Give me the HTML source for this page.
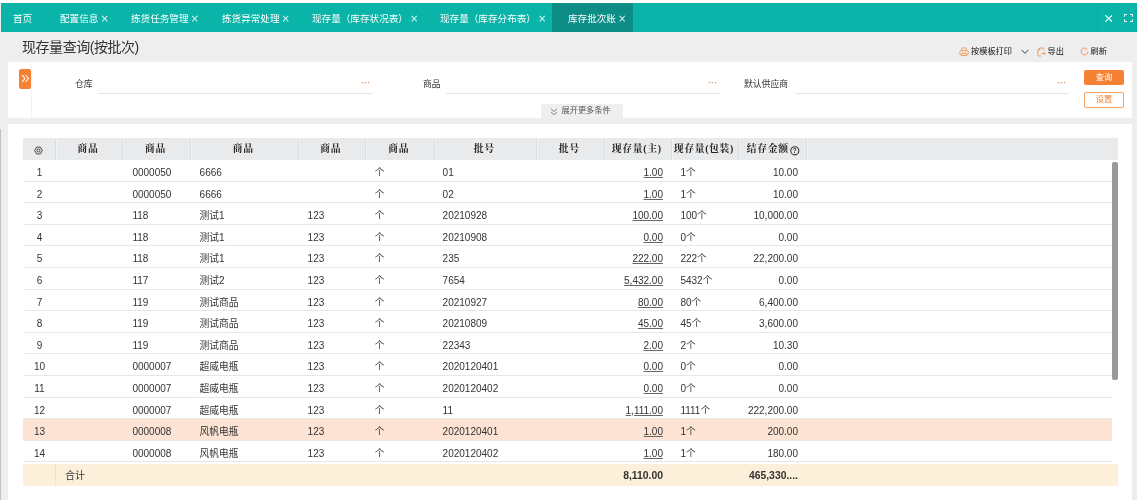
<!DOCTYPE html><html lang="zh-CN"><head><meta charset="utf-8"><title>现存量查询(按批次)</title><style>
*{box-sizing:border-box;margin:0;padding:0}
html,body{width:1137px;height:500px;overflow:hidden;background:#eeeeee;font-family:"Liberation Sans","Noto Sans CJK SC",sans-serif;color:#333}
.abs{position:absolute}
#root{position:absolute;left:0;top:0;width:1137px;height:500px;will-change:transform}
#top{left:0;top:0;width:1137px;height:3px;background:#fff}
#bar{left:1px;top:3.2px;width:1136px;height:29px;background:#0ab4a8}
#bar .t{position:absolute;top:0.8px;height:29.5px;line-height:30px;color:#fff;font-size:9.6px;white-space:nowrap}
#bar .x{font-size:10px;margin-left:2px;opacity:.88;font-weight:400;font-family:'DejaVu Sans',sans-serif;vertical-align:-0.5px}
#act{left:551px;top:0;width:80.8px;height:29px;background:#0d8d85}
#title{left:22px;top:37px;font-size:14px;color:#333;line-height:20px;white-space:nowrap;letter-spacing:-0.45px}
.tb{top:45.5px;font-size:8.2px;color:#111;line-height:12px;white-space:nowrap}
#f{left:8px;top:61.5px;width:1123.5px;height:56.7px;background:#fff}
#fb{left:18.5px;top:69px;width:12.5px;height:20px;background:#f58233;border-radius:2px;color:#fff}
#fl{left:31px;top:61.5px;width:1px;height:56.7px;background:#f3f3f3}
.lb{font-size:8.8px;color:#333;line-height:12px;white-space:nowrap;top:77.6px}
.ul{height:1px;background:#e6e6e6;top:92.5px}
.dots{color:#e8935a;font-size:9px;font-weight:700;top:77.3px;line-height:12px;letter-spacing:0.1px}
#q{left:1084px;top:69.7px;width:40px;height:15.5px;background:#f58233;border-radius:2px;color:#fff;font-size:8.2px;line-height:16.5px;text-align:center}
#s{left:1084px;top:92px;width:40px;height:15.5px;background:#fff;border:1px solid #f5a26a;border-radius:2px;color:#f58233;font-size:8.2px;line-height:14.5px;text-align:center}
#more{left:541px;top:104.3px;width:81.5px;height:14px;background:#efefef;border-radius:2px 2px 0 0;font-size:8.2px;color:#555;line-height:14px;white-space:nowrap}
#p{left:8px;top:124.4px;width:1123.5px;height:376px;background:#fff}
#dl{left:0;top:129px;width:1px;height:371px;background:#c2c2c2}
#th{left:22.5px;top:138.4px;width:1095px;height:21.6px;background:#e9eaec}
.h{top:138px;height:21.7px;line-height:21.7px;text-align:center;font-family:"Liberation Serif","Noto Serif CJK SC",serif;font-weight:700;font-size:9.8px;color:#222;white-space:nowrap;letter-spacing:0.7px;padding-right:2.2px}
.hs{top:138.6px;width:1px;height:21.7px;background:#dcdddf;box-shadow:1px 0 0 #f2f3f4}
.r{left:22.5px;width:1089.5px;border-bottom:1px solid #e7e7e7}
.c{font-size:10px;line-height:14px;color:#333;white-space:nowrap}
.z{font-size:9.75px}
.u{text-decoration:underline;text-decoration-color:#666;text-underline-offset:1px}
#tot{left:22.5px;top:463.8px;width:1095px;height:21.8px;background:#fdf0db}
#sb{left:1112px;top:161.5px;width:5.5px;height:218.5px;background:#9a9a9a;border-radius:2px}
</style></head><body><div id="root">
<div id="top" class="abs"></div>
<div id="bar" class="abs"><div id="act" class="abs"></div>
<div class="t" style="left:12px">首页</div>
<div class="t" style="left:59px">配置信息<span class="x">×</span></div>
<div class="t" style="left:130px">拣货任务管理<span class="x">×</span></div>
<div class="t" style="left:221px">拣货异常处理<span class="x">×</span></div>
<div class="t" style="left:311px">现存量（库存状况表）<span class="x">×</span></div>
<div class="t" style="left:439px">现存量（库存分布表）<span class="x">×</span></div>
<div class="t" style="left:567px">库存批次账<span class="x">×</span></div>
<svg class="abs" style="left:1103.8px;top:11.6px" width="7.4" height="7" viewBox="0 0 7.4 7" fill="none" stroke="#e8fbf9" stroke-width="1.2"><path d="M0.3 0.2L7.1 6.8M7.1 0.2L0.3 6.8"/></svg>
<div class="abs" style="left:1095.7px;top:0;width:1px;height:29px;background:rgba(0,0,0,.035)"></div><div class="abs" style="left:1115.8px;top:0;width:1px;height:29px;background:rgba(0,0,0,.035)"></div>
<svg class="abs" style="left:1123px;top:10.8px" width="9" height="8" viewBox="0 0 9 9" preserveAspectRatio="none" fill="none" stroke="#e8fbf9" stroke-width="1.1"><path d="M0.5 3V0.5H3M6 0.5H8.5V3M8.5 6V8.5H6M3 8.5H0.5V6"/></svg>
</div>
<div id="title" class="abs">现存量查询(按批次)</div>
<div class="abs tb" style="left:971px">按模板打印</div>
<div class="abs tb" style="left:1047.5px">导出</div>
<div class="abs tb" style="left:1090.5px">刷新</div>
<svg class="abs" style="left:958.5px;top:46.5px" width="10" height="10" viewBox="0 0 10 10" fill="none" stroke="#f39a5e" stroke-width="1"><path d="M2.6 3.6V1.6Q2.6 1 3.2 1H6.8Q7.4 1 7.4 1.6V3.6"/><rect x="0.8" y="3.6" width="8.4" height="4.6" rx="1.8"/><path d="M2.8 6.2H7.2V8.6H2.8Z" fill="#eee"/></svg>
<svg class="abs" style="left:1020.5px;top:48.7px" width="8" height="6" viewBox="0 0 8 6" fill="none" stroke="#444" stroke-width="1"><path d="M0.6 0.8L4 4.4L7.4 0.8"/></svg>
<svg class="abs" style="left:1037px;top:46.5px" width="9" height="10" viewBox="0 0 9 10" fill="none" stroke="#f39a5e" stroke-width="1"><path d="M6.8 3V1.8Q6.8 1 6 1H2.6L0.8 3V8Q0.8 9 1.8 9H4"/><path d="M2.8 1V3H0.8"/><path d="M4.2 6.4H8M6.6 4.8L8.2 6.4L6.6 8"/></svg>
<svg class="abs" style="left:1079.8px;top:46.8px" width="9" height="9" viewBox="0 0 9 9" fill="none" stroke="#f39a5e" stroke-width="1"><path d="M7.9 4.5A3.4 3.4 0 1 1 6.6 1.8"/><path d="M5.2 0.8L6.9 1.9L5.6 3.3" stroke-width="0.8"/></svg>
<div id="f" class="abs"></div><div id="fl" class="abs"></div>
<div id="fb" class="abs"><svg style="position:absolute;left:2px;top:5px" width="9" height="9" viewBox="0 0 9 9" fill="none" stroke="#fff" stroke-width="1.1"><path d="M1 1L4 4.5L1 8M4.5 1L7.5 4.5L4.5 8"/></svg></div>
<div class="abs lb" style="left:75px">仓库</div><div class="abs ul" style="left:98px;width:275px"></div><div class="abs dots" style="left:361px">···</div>
<div class="abs lb" style="left:423px">商品</div><div class="abs ul" style="left:446px;width:275px"></div><div class="abs dots" style="left:708px">···</div>
<div class="abs lb" style="left:744px">默认供应商</div><div class="abs ul" style="left:795px;width:274px"></div><div class="abs dots" style="left:1057px">···</div>
<div id="q" class="abs">查询</div><div id="s" class="abs">设置</div>
<div id="more" class="abs"><svg style="position:absolute;left:8.5px;top:3.5px" width="8" height="8" viewBox="0 0 8 8" fill="none" stroke="#777" stroke-width="0.9"><path d="M1 0.8L4 3.6L7 0.8M1 4L4 6.8L7 4"/></svg><span style="position:absolute;left:20.5px">展开更多条件</span></div>
<div id="p" class="abs"></div><div id="dl" class="abs"></div>
<div id="th" class="abs"></div>
<svg class="abs" style="left:34.3px;top:145.5px" width="9" height="9" viewBox="0 0 9 9" fill="none" stroke="#444" stroke-width="1"><path d="M0.7 4.5L2.6 1.1H6.4L8.3 4.5L6.4 7.9H2.6Z" stroke-linejoin="round"/><circle cx="4.5" cy="4.5" r="1.5"/></svg>
<div class="abs hs" style="left:54.7px"></div>
<div class="abs h" style="left:55.2px;width:67.7px">商品</div>
<div class="abs hs" style="left:122.4px"></div>
<div class="abs h" style="left:122.9px;width:67.4px">商品</div>
<div class="abs hs" style="left:189.8px"></div>
<div class="abs h" style="left:190.3px;width:108px">商品</div>
<div class="abs hs" style="left:297.8px"></div>
<div class="abs h" style="left:298.3px;width:67.3px">商品</div>
<div class="abs hs" style="left:365.1px"></div>
<div class="abs h" style="left:365.6px;width:68.4px">商品</div>
<div class="abs hs" style="left:433.5px"></div>
<div class="abs h" style="left:434px;width:102.6px">批号</div>
<div class="abs hs" style="left:536.1px"></div>
<div class="abs h" style="left:536.6px;width:67.5px">批号</div>
<div class="abs hs" style="left:603.6px"></div>
<div class="abs h" style="left:604.1px;width:67.3px">现存量(主)</div>
<div class="abs hs" style="left:670.9px"></div>
<div class="abs h" style="left:671.4px;width:67.2px">现存量(包装)</div>
<div class="abs hs" style="left:738.1px"></div>
<div class="abs h" style="left:738.6px;width:67.7px;text-align:left;padding-left:8.2px">结存金额</div>
<svg class="abs" style="left:790.2px;top:146.4px" width="9.6" height="9.6" viewBox="0 0 9 9" fill="none" stroke="#333" stroke-width="1"><circle cx="4.5" cy="4.5" r="3.8"/><text x="4.5" y="6.6" font-size="6" font-family="Liberation Sans" font-weight="700" text-anchor="middle" fill="#333" stroke="none">?</text></svg>
<div class="abs hs" style="left:805.8px"></div>
<div class="abs r" style="top:160.00px;height:21.60px;background:#fff"></div>
<div class="c abs" style="left:22px;width:35px;text-align:center;top:166.00px">1</div>
<div class="c abs" style="left:132.4px;top:166.00px">0000050</div>
<div class="c abs" style="left:199.6px;top:166.00px">6666</div>
<div class="c abs" style="left:374.8px;top:166.00px"><span class="z">个</span></div>
<div class="c abs" style="left:442.6px;top:166.00px">01</div>
<div class="c abs u" style="right:474px;top:166.00px">1.00</div>
<div class="c abs" style="left:680.4px;top:166.00px">1<span class="z">个</span></div>
<div class="c abs" style="right:339px;top:166.00px">10.00</div>
<div class="abs r" style="top:181.60px;height:21.60px;background:#fff"></div>
<div class="c abs" style="left:22px;width:35px;text-align:center;top:187.60px">2</div>
<div class="c abs" style="left:132.4px;top:187.60px">0000050</div>
<div class="c abs" style="left:199.6px;top:187.60px">6666</div>
<div class="c abs" style="left:374.8px;top:187.60px"><span class="z">个</span></div>
<div class="c abs" style="left:442.6px;top:187.60px">02</div>
<div class="c abs u" style="right:474px;top:187.60px">1.00</div>
<div class="c abs" style="left:680.4px;top:187.60px">1<span class="z">个</span></div>
<div class="c abs" style="right:339px;top:187.60px">10.00</div>
<div class="abs r" style="top:203.20px;height:21.60px;background:#fff"></div>
<div class="c abs" style="left:22px;width:35px;text-align:center;top:209.20px">3</div>
<div class="c abs" style="left:132.4px;top:209.20px">118</div>
<div class="c abs" style="left:199.6px;top:209.20px"><span class="z">测试</span>1</div>
<div class="c abs" style="left:307.6px;top:209.20px">123</div>
<div class="c abs" style="left:374.8px;top:209.20px"><span class="z">个</span></div>
<div class="c abs" style="left:442.6px;top:209.20px">20210928</div>
<div class="c abs u" style="right:474px;top:209.20px">100.00</div>
<div class="c abs" style="left:680.4px;top:209.20px">100<span class="z">个</span></div>
<div class="c abs" style="right:339px;top:209.20px">10,000.00</div>
<div class="abs r" style="top:224.80px;height:21.60px;background:#fff"></div>
<div class="c abs" style="left:22px;width:35px;text-align:center;top:230.80px">4</div>
<div class="c abs" style="left:132.4px;top:230.80px">118</div>
<div class="c abs" style="left:199.6px;top:230.80px"><span class="z">测试</span>1</div>
<div class="c abs" style="left:307.6px;top:230.80px">123</div>
<div class="c abs" style="left:374.8px;top:230.80px"><span class="z">个</span></div>
<div class="c abs" style="left:442.6px;top:230.80px">20210908</div>
<div class="c abs u" style="right:474px;top:230.80px">0.00</div>
<div class="c abs" style="left:680.4px;top:230.80px">0<span class="z">个</span></div>
<div class="c abs" style="right:339px;top:230.80px">0.00</div>
<div class="abs r" style="top:246.40px;height:21.60px;background:#fff"></div>
<div class="c abs" style="left:22px;width:35px;text-align:center;top:252.40px">5</div>
<div class="c abs" style="left:132.4px;top:252.40px">118</div>
<div class="c abs" style="left:199.6px;top:252.40px"><span class="z">测试</span>1</div>
<div class="c abs" style="left:307.6px;top:252.40px">123</div>
<div class="c abs" style="left:374.8px;top:252.40px"><span class="z">个</span></div>
<div class="c abs" style="left:442.6px;top:252.40px">235</div>
<div class="c abs u" style="right:474px;top:252.40px">222.00</div>
<div class="c abs" style="left:680.4px;top:252.40px">222<span class="z">个</span></div>
<div class="c abs" style="right:339px;top:252.40px">22,200.00</div>
<div class="abs r" style="top:268.00px;height:21.60px;background:#fff"></div>
<div class="c abs" style="left:22px;width:35px;text-align:center;top:274.00px">6</div>
<div class="c abs" style="left:132.4px;top:274.00px">117</div>
<div class="c abs" style="left:199.6px;top:274.00px"><span class="z">测试</span>2</div>
<div class="c abs" style="left:307.6px;top:274.00px">123</div>
<div class="c abs" style="left:374.8px;top:274.00px"><span class="z">个</span></div>
<div class="c abs" style="left:442.6px;top:274.00px">7654</div>
<div class="c abs u" style="right:474px;top:274.00px">5,432.00</div>
<div class="c abs" style="left:680.4px;top:274.00px">5432<span class="z">个</span></div>
<div class="c abs" style="right:339px;top:274.00px">0.00</div>
<div class="abs r" style="top:289.60px;height:21.60px;background:#fff"></div>
<div class="c abs" style="left:22px;width:35px;text-align:center;top:295.60px">7</div>
<div class="c abs" style="left:132.4px;top:295.60px">119</div>
<div class="c abs" style="left:199.6px;top:295.60px"><span class="z">测试商品</span></div>
<div class="c abs" style="left:307.6px;top:295.60px">123</div>
<div class="c abs" style="left:374.8px;top:295.60px"><span class="z">个</span></div>
<div class="c abs" style="left:442.6px;top:295.60px">20210927</div>
<div class="c abs u" style="right:474px;top:295.60px">80.00</div>
<div class="c abs" style="left:680.4px;top:295.60px">80<span class="z">个</span></div>
<div class="c abs" style="right:339px;top:295.60px">6,400.00</div>
<div class="abs r" style="top:311.20px;height:21.60px;background:#fff"></div>
<div class="c abs" style="left:22px;width:35px;text-align:center;top:317.20px">8</div>
<div class="c abs" style="left:132.4px;top:317.20px">119</div>
<div class="c abs" style="left:199.6px;top:317.20px"><span class="z">测试商品</span></div>
<div class="c abs" style="left:307.6px;top:317.20px">123</div>
<div class="c abs" style="left:374.8px;top:317.20px"><span class="z">个</span></div>
<div class="c abs" style="left:442.6px;top:317.20px">20210809</div>
<div class="c abs u" style="right:474px;top:317.20px">45.00</div>
<div class="c abs" style="left:680.4px;top:317.20px">45<span class="z">个</span></div>
<div class="c abs" style="right:339px;top:317.20px">3,600.00</div>
<div class="abs r" style="top:332.80px;height:21.60px;background:#fff"></div>
<div class="c abs" style="left:22px;width:35px;text-align:center;top:338.80px">9</div>
<div class="c abs" style="left:132.4px;top:338.80px">119</div>
<div class="c abs" style="left:199.6px;top:338.80px"><span class="z">测试商品</span></div>
<div class="c abs" style="left:307.6px;top:338.80px">123</div>
<div class="c abs" style="left:374.8px;top:338.80px"><span class="z">个</span></div>
<div class="c abs" style="left:442.6px;top:338.80px">22343</div>
<div class="c abs u" style="right:474px;top:338.80px">2.00</div>
<div class="c abs" style="left:680.4px;top:338.80px">2<span class="z">个</span></div>
<div class="c abs" style="right:339px;top:338.80px">10.30</div>
<div class="abs r" style="top:354.40px;height:21.60px;background:#fff"></div>
<div class="c abs" style="left:22px;width:35px;text-align:center;top:360.40px">10</div>
<div class="c abs" style="left:132.4px;top:360.40px">0000007</div>
<div class="c abs" style="left:199.6px;top:360.40px"><span class="z">超威电瓶</span></div>
<div class="c abs" style="left:307.6px;top:360.40px">123</div>
<div class="c abs" style="left:374.8px;top:360.40px"><span class="z">个</span></div>
<div class="c abs" style="left:442.6px;top:360.40px">2020120401</div>
<div class="c abs u" style="right:474px;top:360.40px">0.00</div>
<div class="c abs" style="left:680.4px;top:360.40px">0<span class="z">个</span></div>
<div class="c abs" style="right:339px;top:360.40px">0.00</div>
<div class="abs r" style="top:376.00px;height:21.60px;background:#fff"></div>
<div class="c abs" style="left:22px;width:35px;text-align:center;top:382.00px">11</div>
<div class="c abs" style="left:132.4px;top:382.00px">0000007</div>
<div class="c abs" style="left:199.6px;top:382.00px"><span class="z">超威电瓶</span></div>
<div class="c abs" style="left:307.6px;top:382.00px">123</div>
<div class="c abs" style="left:374.8px;top:382.00px"><span class="z">个</span></div>
<div class="c abs" style="left:442.6px;top:382.00px">2020120402</div>
<div class="c abs u" style="right:474px;top:382.00px">0.00</div>
<div class="c abs" style="left:680.4px;top:382.00px">0<span class="z">个</span></div>
<div class="c abs" style="right:339px;top:382.00px">0.00</div>
<div class="abs r" style="top:397.60px;height:21.60px;background:#fff"></div>
<div class="c abs" style="left:22px;width:35px;text-align:center;top:403.60px">12</div>
<div class="c abs" style="left:132.4px;top:403.60px">0000007</div>
<div class="c abs" style="left:199.6px;top:403.60px"><span class="z">超威电瓶</span></div>
<div class="c abs" style="left:307.6px;top:403.60px">123</div>
<div class="c abs" style="left:374.8px;top:403.60px"><span class="z">个</span></div>
<div class="c abs" style="left:442.6px;top:403.60px">11</div>
<div class="c abs u" style="right:474px;top:403.60px">1,111.00</div>
<div class="c abs" style="left:680.4px;top:403.60px">1111<span class="z">个</span></div>
<div class="c abs" style="right:339px;top:403.60px">222,200.00</div>
<div class="abs r" style="top:419.20px;height:21.60px;background:#fde3d3"></div>
<div class="c abs" style="left:22px;width:35px;text-align:center;top:425.20px">13</div>
<div class="c abs" style="left:132.4px;top:425.20px">0000008</div>
<div class="c abs" style="left:199.6px;top:425.20px"><span class="z">风帆电瓶</span></div>
<div class="c abs" style="left:307.6px;top:425.20px">123</div>
<div class="c abs" style="left:374.8px;top:425.20px"><span class="z">个</span></div>
<div class="c abs" style="left:442.6px;top:425.20px">2020120401</div>
<div class="c abs u" style="right:474px;top:425.20px">1.00</div>
<div class="c abs" style="left:680.4px;top:425.20px">1<span class="z">个</span></div>
<div class="c abs" style="right:339px;top:425.20px">200.00</div>
<div class="abs r" style="top:440.80px;height:21.60px;background:#fff"></div>
<div class="c abs" style="left:22px;width:35px;text-align:center;top:446.80px">14</div>
<div class="c abs" style="left:132.4px;top:446.80px">0000008</div>
<div class="c abs" style="left:199.6px;top:446.80px"><span class="z">风帆电瓶</span></div>
<div class="c abs" style="left:307.6px;top:446.80px">123</div>
<div class="c abs" style="left:374.8px;top:446.80px"><span class="z">个</span></div>
<div class="c abs" style="left:442.6px;top:446.80px">2020120402</div>
<div class="c abs u" style="right:474px;top:446.80px">1.00</div>
<div class="c abs" style="left:680.4px;top:446.80px">1<span class="z">个</span></div>
<div class="c abs" style="right:339px;top:446.80px">180.00</div>
<div id="tot" class="abs"></div>
<div class="abs" style="left:54.8px;top:463.8px;width:1px;height:21.8px;background:#f1e4cd"></div>
<div class="c abs" style="left:65px;top:469px">合计</div>
<div class="c abs" style="right:474px;top:469px;font-weight:700;font-size:10.4px">8,110.00</div>
<div class="c abs" style="right:339px;top:469px;font-weight:700;font-size:10.4px">465,330....</div>
<div id="sb" class="abs"></div>
</div></body></html>
